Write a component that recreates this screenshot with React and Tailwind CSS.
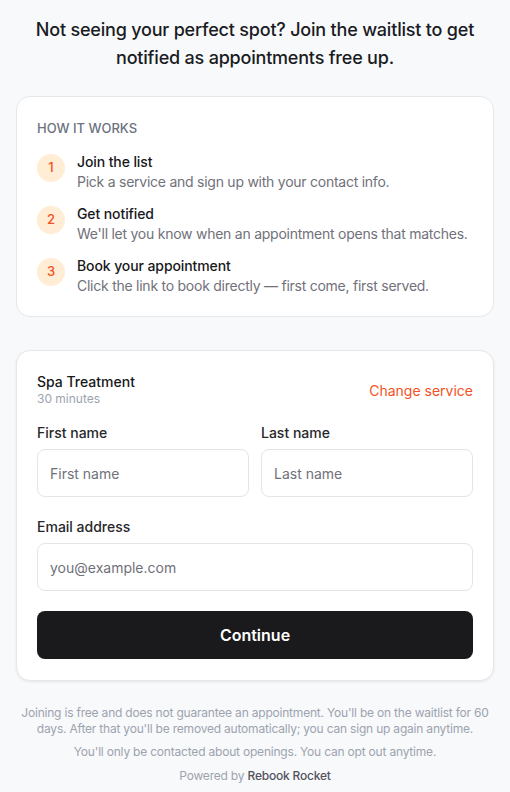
import React from "react";

const steps = [
  { n: "1", t: "Join the list", d: "Pick a service and sign up with your contact info." },
  { n: "2", t: "Get notified", d: "We'll let you know when an appointment opens that matches." },
  { n: "3", t: "Book your appointment", d: "Click the link to book directly — first come, first served." },
];

export default function App() {
  return (
    <div
      className="min-h-[792px] w-full bg-[#f8f9fb] px-4 pt-[16px] pb-4 text-[#18181b]"
      style={{ fontFamily: "Inter, 'Noto Sans', sans-serif" }}
    >
      <h1 className="mx-auto max-w-[450px] text-center text-[18px] leading-[28px] font-medium tracking-[-0.2px] text-[#1a1c23]">
        Not seeing your perfect spot? Join the waitlist to get notified as appointments free up.
      </h1>

      <div className="mt-[24px] rounded-[14px] border border-[#e5e7eb] bg-white px-5 pt-[22px] pb-[20px]">
        <div className="text-[13px] leading-[18px] font-medium uppercase text-[#6b7280]">How it works</div>
        <div className="mt-[15px] flex flex-col gap-[12px]">
          {steps.map((s) => (
            <div key={s.n} className="flex gap-3">
              <div className="mt-[2px] flex h-[28px] w-[28px] shrink-0 items-center justify-center rounded-full bg-[#ffedd5] text-[13px] font-medium text-[#f4511e]">
                {s.n}
              </div>
              <div>
                <div className="text-[14px] leading-[20px] font-medium tracking-[-0.1px] text-[#18181b]">{s.t}</div>
                <div className="whitespace-nowrap text-[14px] leading-[20px] tracking-[-0.25px] text-[#71717a]">{s.d}</div>
              </div>
            </div>
          ))}
        </div>
      </div>

      <div className="mt-[33px] rounded-[14px] border border-[#e5e7eb] bg-white px-5 pt-[22px] pb-[21px] shadow-[0_1px_3px_rgba(0,0,0,0.08)]">
        <div className="flex items-center justify-between">
          <div>
            <div className="text-[14px] leading-[18px] font-medium text-[#18181b]">Spa Treatment</div>
            <div className="text-[12px] leading-[16px] text-[#9ca3af]">30 minutes</div>
          </div>
          <div className="text-[14px] font-normal text-[#f4511e]">Change service</div>
        </div>

        <div className="mt-[16px] grid grid-cols-2 gap-3">
          <div>
            <div className="text-[14px] leading-[20px] font-medium text-[#27272a]">First name</div>
            <input
              placeholder="First name"
              className="mt-[6px] h-[48px] w-full rounded-[8px] border border-[#e4e4e7] bg-white px-3 text-[14px] text-[#18181b] placeholder:text-[#71717a] outline-none"
            />
          </div>
          <div>
            <div className="text-[14px] leading-[20px] font-medium text-[#27272a]">Last name</div>
            <input
              placeholder="Last name"
              className="mt-[6px] h-[48px] w-full rounded-[8px] border border-[#e4e4e7] bg-white px-3 text-[14px] text-[#18181b] placeholder:text-[#71717a] outline-none"
            />
          </div>
        </div>

        <div className="mt-[20px]">
          <div className="text-[14px] leading-[20px] font-medium text-[#27272a]">Email address</div>
          <input
            placeholder="you@example.com"
            className="mt-[6px] h-[48px] w-full rounded-[8px] border border-[#e4e4e7] bg-white px-3 text-[14px] text-[#18181b] placeholder:text-[#71717a] outline-none"
          />
        </div>

        <button className="mt-[20px] flex h-[48px] w-full items-center justify-center rounded-[8px] bg-[#1a1a1c] text-[16px] font-semibold text-white">
          Continue
        </button>
      </div>

      <div className="mt-[24px] text-center text-[12px] leading-[16px] tracking-[-0.2px] text-[#9ca3af]">
        <p>
          Joining is free and does not guarantee an appointment. You'll be on the waitlist for 60 days. After that you'll be removed automatically; you can sign up again anytime.
        </p>
        <p className="mt-[7px]">You'll only be contacted about openings. You can opt out anytime.</p>
        <p className="mt-[8px]">
          Powered by <span className="font-medium text-[#52525b]">Rebook Rocket</span>
        </p>
      </div>
    </div>
  );
}
